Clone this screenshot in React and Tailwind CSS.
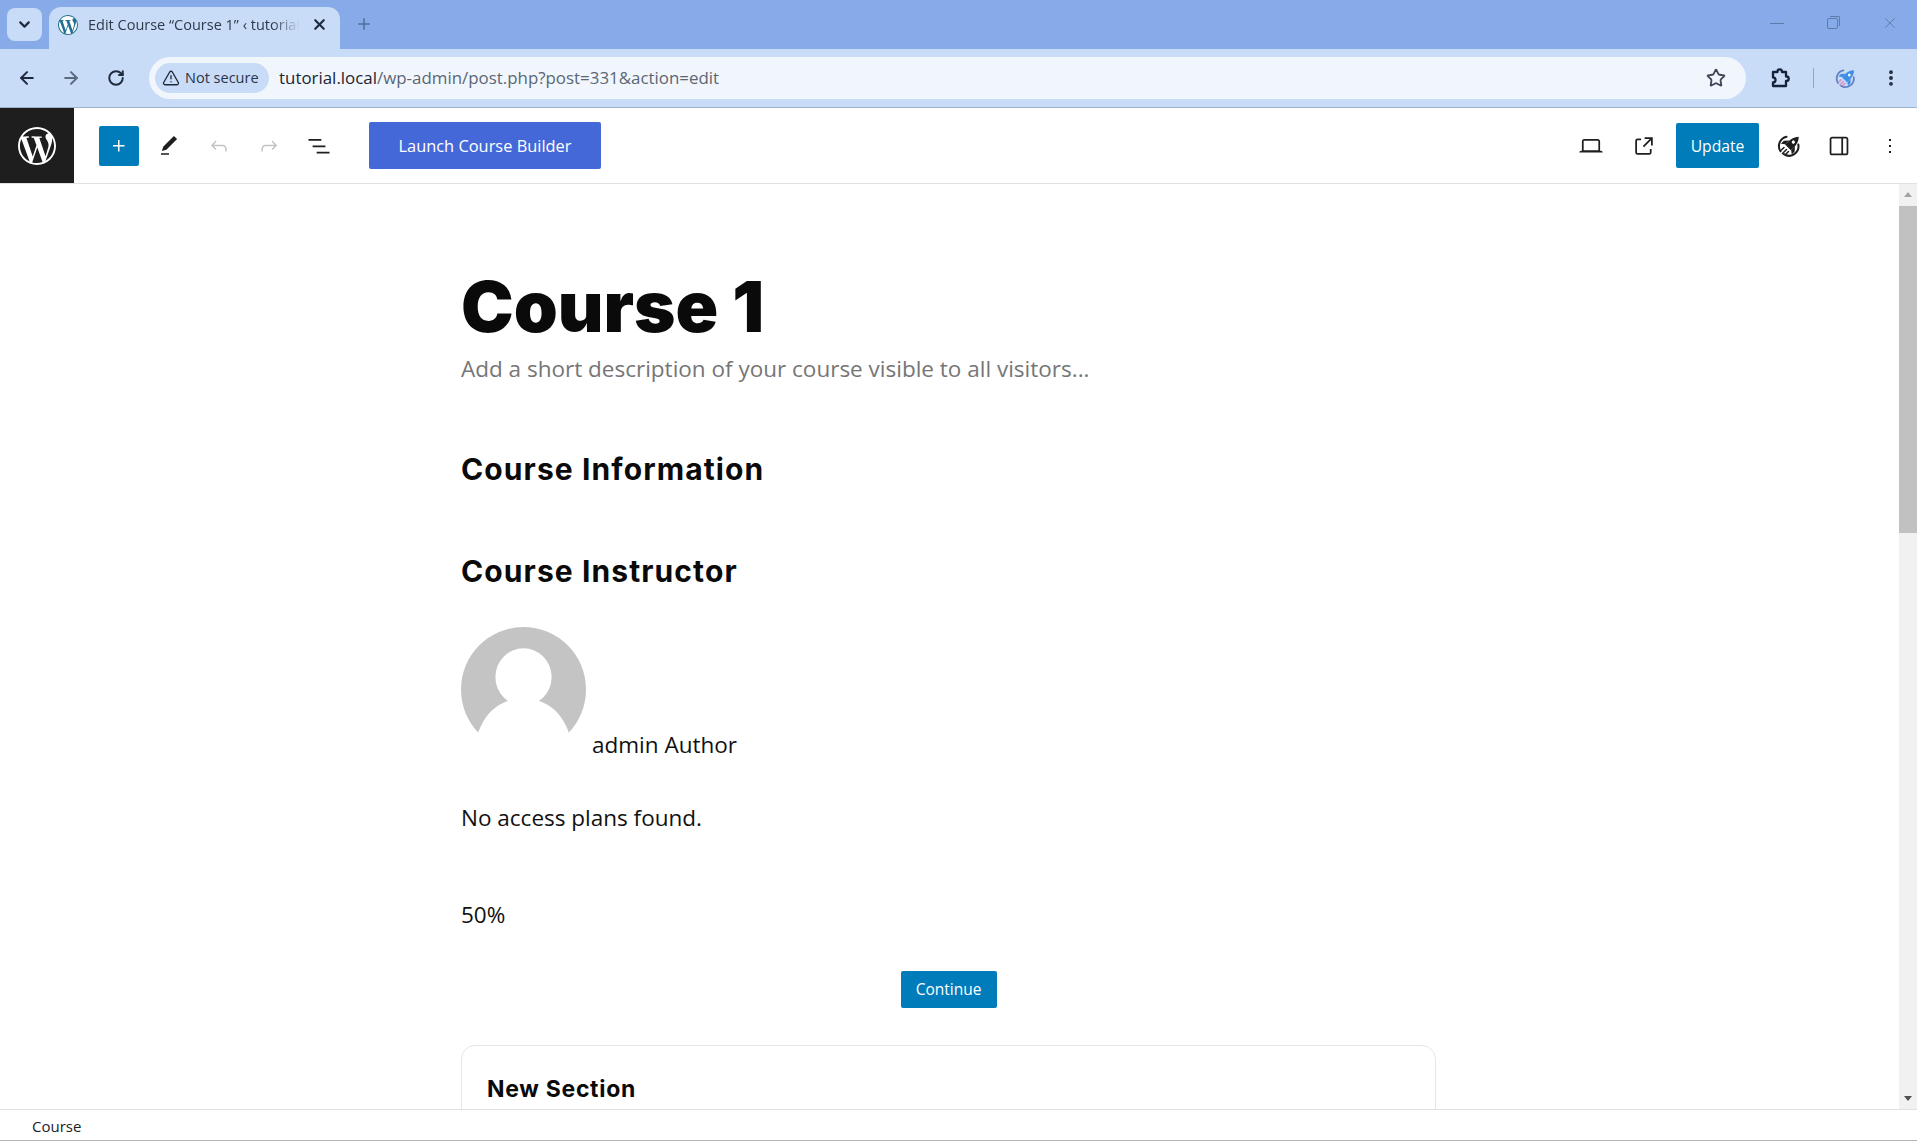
import { ArrowLeft, ArrowRight, ChevronDown, EllipsisVertical, Plus, RotateCw, Star, TriangleAlert, X } from 'lucide-react'
import { SiWordpress } from 'react-icons/si'

const uiFont = "font-['Open_Sans','Noto_Sans',sans-serif]"
const headFont = "font-['Inter','Liberation_Sans',sans-serif]"

function WpIcon({ path, className }) {
  return (
    <svg viewBox="0 0 24 24" className={className} fill="currentColor">
      <path d={path} />
    </svg>
  )
}

// rocket inside a broken ring, used for the extension and the plugin button
function RocketBadge({ className, ring, streak }) {
  return (
    <svg viewBox="0 0 24 24" className={className} fill="none">
      <path d="M9.500 2.800a9.500 9.500 0 0 0-6 14.500" stroke={ring} strokeWidth="2" strokeLinecap="round" />
      <path d="M21.300 10.500a9.500 9.500 0 0 1-14.500 9.700" stroke={ring} strokeWidth="2" strokeLinecap="round" />
      <g transform="rotate(45 12 12) translate(1.500 -1.500) scale(0.9)">
        <path d="M12 0C15.500 3.500 16.500 8 16.500 12V17H7.500V12C7.500 8 8.500 3.500 12 0Z" fill="currentColor" />
        <path d="M7.500 10.500L3.500 15V19.500L7.500 16.500ZM16.500 10.500L20.500 15V19.500L16.500 16.500Z" fill="currentColor" />
        <circle cx="12" cy="8.500" r="1.800" fill="#fff" />
      </g>
      <path d="M9.500 15.500L5.500 19.500M11.500 17.500L9 20M7 13.500L4.500 16" stroke={streak} strokeWidth="1.500" strokeLinecap="round" />
    </svg>
  )
}

function BrowserChrome() {
  return (
    <div className={`${uiFont} shrink-0`}>
      {/* tab strip */}
      <div className="flex h-[49px] items-end bg-[#87abe8] pl-[7px]">
        <div className="mb-2 flex h-[33px] w-[35px] items-center justify-center rounded-lg bg-[#c8dbf7] text-[#1f2a3d]">
          <ChevronDown size={17} strokeWidth={3} />
        </div>
        <div className="ml-[7px] flex h-[42px] w-[291px] items-center rounded-t-xl bg-[#c8dbf7] pb-[7px] pl-[9px] pr-3">
          <span className="flex h-5 w-5 shrink-0 items-center justify-center rounded-full bg-white">
            <SiWordpress size={20} className="text-[#1f6f8f]" />
          </span>
          <span className="ml-[10px] w-[214px] whitespace-nowrap text-[14.5px] text-[#2f3a4a] [mask-image:linear-gradient(to_right,black_86%,transparent_99%)]">
            Edit Course “Course 1” ‹ tutorial
          </span>
          <X size={17} strokeWidth={3} className="ml-auto text-[#1f2a3d]" />
        </div>
        <Plus size={18} className="mb-[16px] ml-[15px] text-[#4f6f9f]" />
        <div className="mb-[17px] ml-auto flex items-center gap-[43px] pr-[18px] text-[#5d7aa8]">
          <span className="h-px w-[14px] bg-[#5d7aa8]" />
          <span className="relative h-[11px] w-[11px] rounded-[2px] border border-[#5d7aa8] after:absolute after:-right-[3px] after:-top-[3px] after:h-[10px] after:w-[10px] after:rounded-tr-[2px] after:border-r after:border-t after:border-[#5d7aa8]" />
          <X size={18} strokeWidth={1.2} />
        </div>
      </div>

      {/* address bar row */}
      <div className="flex h-[59px] items-center border-b border-[#9fb3cc] bg-[#c8dbf7] pl-[17px] text-[#1f2a3d]">
        <ArrowLeft size={20} strokeWidth={2.4} />
        <ArrowRight size={20} strokeWidth={2.4} className="ml-[24px] text-[#5c6a7d]" />
        <RotateCw size={18} strokeWidth={2.6} className="ml-[26px]" />
        <div className="ml-[24px] flex h-[42px] w-[1597px] items-center rounded-full bg-[#f1f6fd] pl-[6px] pr-[20px]">
          <div className="flex h-[30px] w-[114px] items-center rounded-full bg-[#c8dbf7] pl-[7px]">
            <TriangleAlert size={18} strokeWidth={1.8} />
            <span className="ml-[5px] whitespace-nowrap text-[14.500px] font-medium text-[#2a3547]">Not secure</span>
          </div>
          <span className="ml-[10px] whitespace-nowrap text-[16.900px] text-[#5b6675]">
            <span className="text-[#1c2533]">tutorial.local</span>/wp-admin/post.php?post=331&amp;action=edit
          </span>
          <Star size={20} strokeWidth={2.2} className="ml-auto text-[#3c4656]" />
        </div>
        <svg viewBox="0 0 24 24" className="ml-[22px] h-[24px] w-[24px] text-[#14233a]" fill="none" stroke="currentColor" strokeWidth="2.300" strokeLinejoin="round">
          <path d="M5 6h4.500v-.5a2.200 2.200 0 0 1 4.400 0V6H18v4.500h.5a2.200 2.200 0 0 1 0 4.400H18V20H5v-3.500a2.500 2.500 0 0 0 0-5V6z" />
        </svg>
        <span className="ml-[21px] h-5 w-px bg-[#8fa6c4]" />
        <RocketBadge className="ml-[21px] h-[21px] w-[21px] text-[#3c8ee6]" ring="#5f7fc0" streak="#d58bc8" />
        <EllipsisVertical size={20} strokeWidth={2.6} className="ml-[25px]" />
      </div>
    </div>
  )
}

function EditorHeader() {
  return (
    <header className={`${uiFont} flex h-[76px] shrink-0 items-center border-b border-[#e0e0e0] bg-white text-[#1e1e1e]`}>
      <div className="flex h-full w-[74px] items-center justify-center bg-[#1e1e1e]">
        <SiWordpress size={38} className="text-white" />
      </div>
      <button className="ml-[25px] flex h-[40px] w-[40px] items-center justify-center rounded-[2px] bg-[#007cba] text-white">
        <WpIcon className="h-6 w-6" path="M11 12.5V17.5H12.5V12.5H17.5V11H12.5V6H11V11H6V12.5H11Z" />
      </button>
      <WpIcon className="ml-[18px] h-6 w-6" path="M20.1 5.1L16.9 2 6.2 12.700l-1.300 4.400 4.500-1.300L20.100 5.100zM4 20.800h8v-1.500H4v1.500z" />
      <WpIcon className="ml-[26px] h-6 w-6 text-[#c4c4c4]" path="M18.300 11.700c-.6-.6-1.400-.9-2.300-.9H6.700l2.900-3.300-1.100-1-4.500 5L8.500 16l1-1-2.700-2.700H16c.5 0 .9.2 1.300.5 1 1 1 3.400 1 4.500v.3h1.500v-.2c0-1.500 0-4.300-1.500-5.700z" />
      <WpIcon className="ml-[26px] h-6 w-6 text-[#c4c4c4]" path="M15.600 6.500l-1.100 1 2.900 3.300H8c-.9 0-1.700.3-2.300.9-1.400 1.500-1.400 4.200-1.400 5.600v.2h1.500v-.3c0-1.100 0-3.500 1-4.500.3-.3.7-.5 1.300-.5h9.200L14.500 15l1.100 1.100 4.600-4.600-4.600-5z" />
      <WpIcon className="ml-[24px] h-7 w-7" path="M3 6h11v1.500H3V6zm3.500 5.500h11V13h-11v-1.500zM21 17H10v1.500h11V17z" />
      <button className="ml-[36px] h-[47px] w-[232px] rounded-[2px] bg-[#4568d8] pt-[2px] text-[16.400px] text-white">
        Launch Course Builder
      </button>
      <div className="ml-auto flex items-center">
        <WpIcon className="h-7 w-7" path="M20.500 16h-.7V8c0-1.100-.9-2-2-2H6.200c-1.100 0-2 .9-2 2v8h-.7c-.8 0-1.500.7-1.500 1.500h20c0-.8-.7-1.500-1.500-1.500zM5.700 8c0-.3.2-.5.5-.5h11.600c.3 0 .5.2.5.5v7.600H5.700V8z" />
        <WpIcon className="ml-[25px] h-7 w-7" path="M19.500 4.500h-7V6h4.440l-5.970 5.970 1.060 1.060L18 7.060v4.440h1.500v-7Zm-13 1a2 2 0 0 0-2 2v10a2 2 0 0 0 2 2h10a2 2 0 0 0 2-2v-3H17v3a.5.5 0 0 1-.5.500h-10a.5.5 0 0 1-.5-.5v-10a.5.5 0 0 1 .5-.5h3V5.500h-3Z" />
        <button className="ml-[18px] h-[45px] w-[83px] rounded-[2px] bg-[#007cba] pt-[3px] text-[15.700px] text-white">Update</button>
        <RocketBadge className="ml-[18px] h-[24px] w-[24px]" ring="#1e1e1e" streak="#1e1e1e" />
        <WpIcon className="ml-[24px] h-7 w-7" path="M18 4H6c-1.100 0-2 .9-2 2v12c0 1.100.9 2 2 2h12c1.100 0 2-.9 2-2V6c0-1.100-.9-2-2-2zm-4 14.500H6c-.3 0-.5-.2-.5-.5V6c0-.3.2-.5.5-.5h8v13zm4.500-.5c0 .3-.2.5-.5.5h-2.500v-13H18c.3 0 .5.2.5.500v12z" />
        <WpIcon className="ml-[25px] mr-[15px] h-6 w-6" path="M13 19h-2v-2h2v2zm0-6h-2v-2h2v2zm0-6h-2V5h2v2z" />
      </div>
    </header>
  )
}

function Avatar() {
  return (
    <svg viewBox="0 0 100 100" className="h-[125px] w-[125px] shrink-0">
      <circle cx="50" cy="50" r="50" fill="#c4c4c4" />
      <ellipse cx="50" cy="40" rx="22.500" ry="23" fill="#fff" />
      <path d="M38 59C26 63 17 72 12 90V102H88V90C83 72 74 63 62 59Z" fill="#fff" />
    </svg>
  )
}

function Scrollbar() {
  return (
    <div className="flex w-[18px] shrink-0 flex-col items-center bg-[#f1f1f1]">
      <span className="mt-[8px] h-0 w-0 border-x-[4px] border-b-[5px] border-x-transparent border-b-[#a3a3a3]" />
      <div className="mt-[9px] h-[327px] w-full bg-[#c1c1c1]" />
      <span className="mb-[8px] mt-auto h-0 w-0 border-x-[4px] border-t-[5px] border-x-transparent border-t-[#505050]" />
    </div>
  )
}

function Content() {
  return (
    <main className="flex min-w-0 flex-1 justify-center overflow-hidden">
      <div className={`${uiFont} mr-[2px] w-[975px] text-[22.500px] text-[#111]`}>
        <h1 className={`${headFont} mt-[76px] text-[70.500px] font-black leading-[94px] text-[#0a0a0a]`}>Course 1</h1>
        <p className="-mt-[1px] leading-[32px] text-[#767676]">
          Add a short description of your course visible to all visitors...
        </p>
        <h2 className={`${headFont} mt-[64px] text-[30px] font-bold leading-[40px] tracking-[1.1px] text-[#0a0a0a]`}>Course Information</h2>
        <h2 className={`${headFont} mt-[62px] text-[30px] font-bold leading-[40px] tracking-[1.1px] text-[#0a0a0a]`}>Course Instructor</h2>
        <div className="mt-[36px] flex items-end">
          <Avatar />
          <span className="mb-[-9px] ml-[6px] leading-[32px]">admin Author</span>
        </div>
        <p className="mt-[50px] leading-[32px]">No access plans found.</p>
        <p className="mt-[65px] leading-[32px]">50%</p>
        <div className="mt-[40px] flex justify-center">
          <button className="h-[37px] w-[96px] rounded-[2px] bg-[#007cba] text-[15.500px] text-white">Continue</button>
        </div>
        <section className="mt-[37px] h-[120px] rounded-[14px] border border-[#e6e6e6] px-[25px] pt-[27px]">
          <h3 className={`${headFont} text-[23px] font-bold leading-[32px] tracking-[0.7px] text-[#0a0a0a]`}>New Section</h3>
        </section>
      </div>
    </main>
  )
}

export default function App() {
  return (
    <div className="flex h-screen flex-col overflow-hidden bg-white">
      <BrowserChrome />
      <EditorHeader />
      <div className="flex min-h-0 flex-1">
        <Content />
        <Scrollbar />
      </div>
      <footer className={`${uiFont} flex h-[32px] shrink-0 items-center border-t border-b border-t-[#e0e0e0] border-b-[#b5b5b5] bg-white pl-[32px] pt-[2px] text-[15px] text-[#222]`}>
        Course
      </footer>
    </div>
  )
}
